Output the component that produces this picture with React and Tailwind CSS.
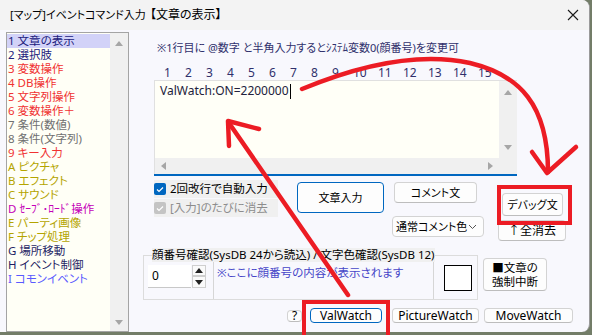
const ITEMS = [
  ["1 文章の表示", "text-[#20207c]"],
  ["2 選択肢", "text-[#20207c]"],
  ["3 変数操作", "text-[#f03232]"],
  ["4 DB操作", "text-[#f03232]"],
  ["5 文字列操作", "text-[#f03232]"],
  ["6 変数操作＋", "text-[#f03232]"],
  ["7 条件(数値)", "text-[#707070]"],
  ["8 条件(文字列)", "text-[#707070]"],
  ["9 キー入力", "text-[#f03232]"],
  ["A ピクチャ", "text-[#b4a400]"],
  ["B エフェクト", "text-[#b4a400]"],
  ["C サウンド", "text-[#b4a400]"],
  ["D ｾｰﾌﾞ･ﾛｰﾄﾞ操作", "text-[#c400b8]"],
  ["E パーティ画像", "text-[#b4a400]"],
  ["F チップ処理", "text-[#b4a400]"],
  ["G 場所移動", "text-[#1e1e64]"],
  ["H イベント制御", "text-[#1e1e64]"],
  ["I コモンイベント", "text-[#5a5aff]"],
];

const NUMS = [1, 2, 3, 4, 5, 6, 7, 8, 9, 10, 11, 12, 13, 14, 15];

function Tri({ dir, color = "#a6a6a6" }) {
  const pts = {
    up: "0,5 4,0 8,5",
    down: "0,0 8,0 4,5",
    left: "5,0 5,8 0,4",
    right: "0,0 0,8 5,4",
  }[dir];
  const horiz = dir === "left" || dir === "right";
  return (
    <svg width={horiz ? 5 : 8} height={horiz ? 8 : 5} className="block">
      <polygon points={pts} fill={color} />
    </svg>
  );
}

function Btn({ className, focus, children }) {
  return (
    <div
      className={`flex items-center justify-center whitespace-nowrap rounded-[4px] border bg-[#fdfdfd] ${
        focus ? "border-[#0067c0]" : "border-[#d3d3d3] border-b-[#bdbdbd]"
      } ${className}`}
    >
      {children}
    </div>
  );
}

function Check({ disabled }) {
  return (
    <div
      className={`w-[12px] h-[12px] rounded-[2px] flex items-center justify-center shrink-0 ${
        disabled ? "bg-[#c4c4c4]" : "bg-[#0067c0]"
      }`}
    >
      <svg width="8" height="7">
        <polyline points="1,3.5 3,5.5 7,1.5" fill="none" stroke="#fff" strokeWidth="1.2" />
      </svg>
    </div>
  );
}

export default function App() {
  return (
    <div className="relative w-[592px] h-[335px] overflow-hidden bg-[#737d68] font-['Noto_Sans','Noto_Sans_CJK_JP',sans-serif] [font-feature-settings:'palt'] text-[11px] leading-[14px] text-black">
      <div className="flex flex-col w-[590px] h-[332px] bg-[#f8f8fd] rounded-tr-[8px] rounded-br-[8px] border-r border-[#9a9a9a] overflow-hidden">
        {/* title bar */}
        <div className="h-[30px] shrink-0 bg-[#f3f3f3] flex items-center pl-[10px] pr-[8px] whitespace-nowrap">
          <span className="w-[140px] shrink-0 text-[11px]">[マップ]イベントコマンド入力</span>
          <span className="text-[12px]">【文章の表示】</span>
          <svg width="12" height="12" className="ml-auto mr-[2px]">
            <path d="M1 1 L11 11 M11 1 L1 11" stroke="#1a1a1a" strokeWidth="1.1" />
          </svg>
        </div>

        <div className="flex flex-1 min-h-0">
          {/* command list */}
          <div className="ml-[6px] mt-[2px] w-[123px] h-[300px] border border-[#a4a4a4] bg-[#fffff6] flex shrink-0">
            <div className="w-[103px] pt-[1px] text-[11.5px]">
              {ITEMS.map(([t, c], i) => (
                <div
                  key={i}
                  className={`h-[14px] pl-[1px] whitespace-nowrap ${c} ${i === 0 ? "bg-[#d2d2f8]" : ""}`}
                >
                  {t}
                </div>
              ))}
            </div>
            <div className="w-[18px] bg-[#f0f0f0] flex flex-col items-center justify-between pt-[8px] pb-[6px]">
              <Tri dir="up" />
              <Tri dir="down" />
            </div>
          </div>

          {/* right side */}
          <div className="ml-[11px] flex flex-col w-[450px]">
            <div className="mt-[11px] ml-[17px] h-[14px] whitespace-nowrap text-[#30306c]">
              ※1行目に @数字 と半角入力するとｼｽﾃﾑ変数0(顔番号)を変更可
            </div>
            <div className="mt-[11px] ml-[24px] h-[14px] flex text-[#30306c] text-[12px]">
              {NUMS.map((n) => (
                <span key={n} className={n < 10 ? "w-[21px]" : "w-[25px]"}>
                  {n}
                </span>
              ))}
            </div>

            {/* text area */}
            <div className="ml-[14px] w-[363px] h-[96px] flex flex-col">
              <div className="flex flex-1 border-l border-t border-[#e0e0e0]">
                <div className="flex-1 bg-[#fffff7] pl-[5px] pt-[3px] text-[#22223c] text-[12px] flex items-start h-[77px]">
                  <span>ValWatch:ON=2200000</span>
                  <span className="w-[1px] h-[15px] bg-black ml-[1px]" />
                </div>
                <div className="w-[18px] bg-[#f0f0f0] flex flex-col items-center justify-between pt-[9px] pb-[8px]">
                  <Tri dir="up" />
                  <Tri dir="down" />
                </div>
              </div>
              <div className="h-[16px] flex border-l border-[#e0e0e0]">
                <div className="flex-1 bg-[#f0f0f0] flex items-center justify-between pl-[6px] pr-[6px]">
                  <Tri dir="left" />
                  <Tri dir="right" />
                </div>
                <div className="w-[18px] bg-[#f0f0f0]" />
              </div>
              <div className="h-[2px] bg-[#0067c0]" />
            </div>

            {/* controls */}
            <div className="mt-[4px] h-[64px] flex items-start">
              <div className="ml-[14px] w-[124px] flex flex-col gap-[1px] text-[11.5px]">
                <div className="h-[18px] bg-[#f0f0f0] flex items-center whitespace-nowrap">
                  <Check />
                  <span className="ml-[4px]">2回改行で自動入力</span>
                </div>
                <div className="h-[18px] bg-[#f0f0f0] flex items-center whitespace-nowrap">
                  <Check disabled />
                  <span className="ml-[4px] text-[#8c8c8c]">[入力]のたびに消去</span>
                </div>
              </div>
              <Btn focus className="ml-[19px] mt-[2px] w-[87px] h-[31px]">
                文章入力
              </Btn>
              <div className="ml-[8px] flex flex-col">
                <Btn className="ml-[2px] mt-[2px] w-[83px] h-[21px]">コメント文</Btn>
                <div className="mt-[13px] w-[92px] h-[21px] rounded-[4px] border border-[#d3d3d3] bg-[#fdfdfd] flex items-center pl-[3px] pr-[6px] whitespace-nowrap">
                  <span>通常コメント色</span>
                  <svg width="9" height="6" className="ml-auto">
                    <polyline points="1,1 4.5,4.5 8,1" fill="none" stroke="#555" strokeWidth="1" />
                  </svg>
                </div>
              </div>
              <div className="ml-[14px] flex flex-col">
                <Btn className="ml-[4px] mt-[13px] w-[61px] h-[23px]">デバッグ文</Btn>
                <Btn className="mt-[4px] w-[68px] h-[21px] text-[12px]">↑全消去</Btn>
              </div>
            </div>

            {/* group box */}
            <div className="mt-[4px] flex items-start">
              <fieldset className="ml-[3px] w-[335px] h-[52px] border border-[#dcdcdc]">
                <legend className="ml-[8px] bg-[#f0f0f0] h-[14px] whitespace-nowrap text-[11.5px]">
                  顔番号確認(SysDB 24から読込) / 文字色確認(SysDB 12)
                </legend>
                <div className="flex items-start">
                  <div className="ml-[4px] mt-[3px] flex h-[23px]">
                    <div className="w-[43px] bg-white border-b border-[#c8c8c8] pl-[4px] flex items-center text-[12px]">0</div>
                    <div className="w-[14px] flex flex-col ml-[1px]">
                      <div className="h-[11px] border border-[#cfcfcf] bg-[#fafafa] flex items-center justify-center">
                        <Tri dir="up" color="#222" />
                      </div>
                      <div className="h-[12px] border border-[#cfcfcf] bg-[#fafafa] flex items-center justify-center">
                        <Tri dir="down" color="#222" />
                      </div>
                    </div>
                  </div>
                  <div className="ml-[7px] w-[221px] h-[37px] border-l border-r border-[#d6d6d6] pl-[3px] pt-[4px] text-[#4646c8] text-[11.5px] whitespace-nowrap">
                    ※ここに顔番号の内容が表示されます
                  </div>
                  <div className="ml-[10px] mt-[3px] w-[28px] h-[26px] border border-black bg-white" />
                </div>
              </fieldset>
              <Btn className="ml-[5px] mt-[10px] w-[64px] h-[33px] flex-col text-[11.5px]">
                <span>■文章の</span>
                <span>強制中断</span>
              </Btn>
            </div>

            {/* bottom buttons */}
            <div className="mt-[8px] flex items-start text-[12px]">
              <Btn className="ml-[147px] mt-[2px] w-[15px] h-[12px] leading-[12px]">?</Btn>
              <Btn focus className="ml-[8px] w-[72px] h-[15px]">ValWatch</Btn>
              <Btn className="ml-[10px] w-[87px] h-[15px]">PictureWatch</Btn>
              <Btn className="ml-[5px] w-[89px] h-[15px]">MoveWatch</Btn>
            </div>
          </div>
        </div>
      </div>

      {/* red annotations */}
      <svg className="absolute inset-0 pointer-events-none" width="592" height="335">
        <g fill="none" stroke="#ec1c24" strokeWidth="4.5" strokeLinecap="round" strokeLinejoin="round">
          <line x1="348" y1="295" x2="229" y2="123" />
          <polyline points="259,129 228,121 229,146" />
          <path d="M302 89 C360 65 420 52 470 63 C520 75 548 105 548 172" />
          <polyline points="532,152 547,173 576,147" />
        </g>
        <g fill="none" stroke="#ec1c24" strokeWidth="4">
          <rect x="499" y="187" width="71" height="36" />
          <rect x="304" y="302" width="84" height="40" />
        </g>
      </svg>
    </div>
  );
}
